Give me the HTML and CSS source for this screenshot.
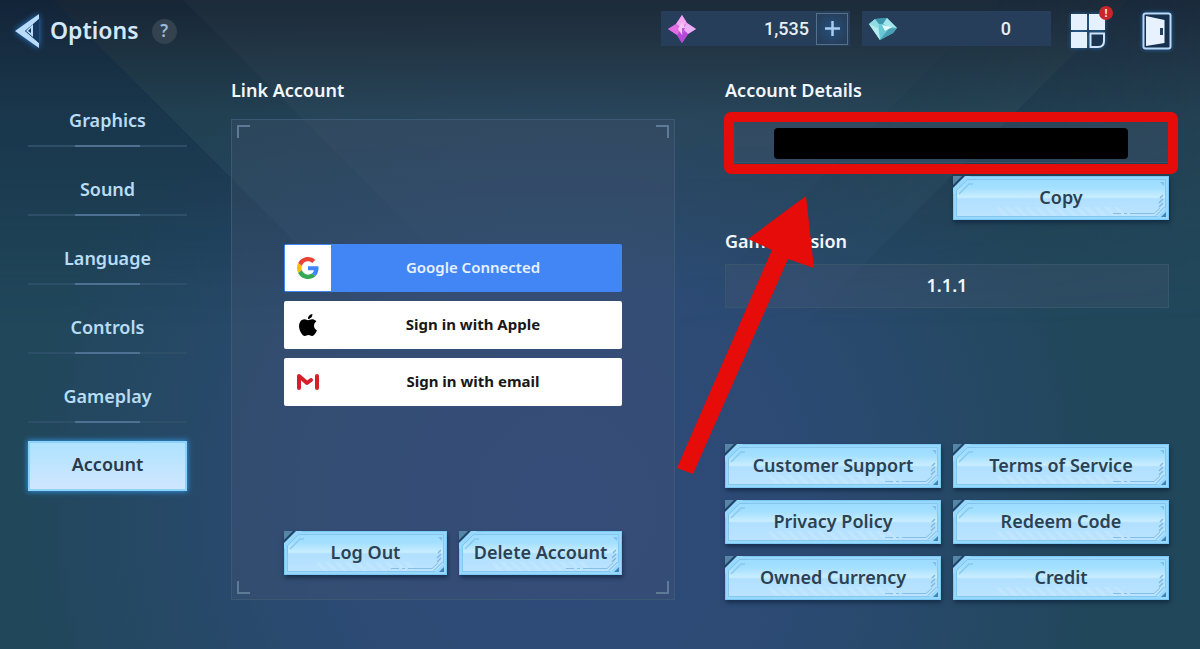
FILE: index.html
```html
<!DOCTYPE html>
<html lang="en">
<head>
    <meta charset="UTF-8">
    <meta name="viewport" content="width=device-width, initial-scale=1.0">
    <title>Options</title>
    <link rel="stylesheet" href="styles.css">
</head>
<body>
    <!-- shared corner ornaments of the plate buttons -->
    <svg class="defs" width="0" height="0" aria-hidden="true">
        <symbol id="plate-tl" viewBox="0 0 24 24">
            <path d="M0 0H18L0 18Z" fill="#98d8fc"/>
            <path d="M24 3.500H14.500L3.500 14.500V24" fill="none" stroke="#7fc3ee"/>
            <path d="M6 18L16 8H20" fill="none" stroke="#88c9f0" stroke-width="1.500"/>
            <path d="M0 0H12L0 12Z" fill="#1f4468"/>
            <path d="M0 0H9L0 9Z" fill="#5586a8"/>
        </symbol>
        <symbol id="plate-br" viewBox="0 0 60 40">
            <path d="M52 3H56V7Z" fill="#7fc1ea"/>
            <path d="M48 39L59 28V39Z" fill="#98d8fc"/>
            <path d="M48 36.500L56.500 28" stroke="#70b4df" fill="none"/>
            <path d="M53 38H58V33Z" fill="#3f83b8"/>
            <path d="M5 34.500H13M16 34.500H19M22 34.500H46L52 29" stroke="#86bfe3" fill="none"/>
            <path d="M51 28L55 24M51 24L55 20M52 19L55 16" stroke="#80b9de" stroke-width="1.500" fill="none"/>
        </symbol>
    </svg>

    <header class="topbar">
        <button class="icon-btn back" aria-label="Back">
            <svg width="26" height="36" viewBox="0 0 26 36">
                <path d="M25 1V6L11 18L25 30V35L1 18Z" fill="#b9dcfb"/>
                <path d="M25 6L11 18L25 30Z" fill="#17395f"/>
                <path d="M19 11V24L12 18Z" fill="#b9dcfb"/>
                <path d="M17 15V20L14 18Z" fill="#17395f"/>
            </svg>
        </button>
        <h1>Options</h1>
        <button class="help" aria-label="Help">?</button>

        <div class="wallet">
            <div class="currency">
                <svg width="30" height="30" viewBox="0 0 30 30">
                    <path d="M15 1L20 9L29 15L21 20L15 29L10 21L1 15L9 10Z" fill="#c455e0"/>
                    <path d="M15 1L20 9L15 14L9 10Z" fill="#f3a6f2"/>
                    <path d="M29 15L21 20L16 15L20 9Z" fill="#e9b0f5"/>
                    <path d="M15 29L10 21L15 15L21 20Z" fill="#b848dc"/>
                    <path d="M1 15L9 10L14 15L10 21Z" fill="#e26ee4"/>
                    <path d="M15 8L18 14L15 21L11 15Z" fill="#f9c4f4"/>
                    <path d="M15 14L18 14L15 21Z" fill="#c44fd8"/>
                </svg>
                <span class="amount">1,535</span>
                <button class="plus" aria-label="Add">
                    <svg width="17" height="17" viewBox="0 0 17 17">
                        <path d="M8.500 1V16M1 8.500H16" stroke="#a9cdf0" stroke-width="2.500"/>
                    </svg>
                </button>
            </div>
            <div class="currency">
                <svg width="30" height="30" viewBox="0 0 30 30">
                    <path d="M1 10L7 5L19 4L29 14L25 19L12 26Z" fill="#5bb9c9"/>
                    <path d="M1 10L7 5L11 10L12 26Z" fill="#8fdce4"/>
                    <path d="M7 5L19 4L15 10L11 10Z" fill="#3e98ad"/>
                    <path d="M19 4L29 14L21 13L15 10Z" fill="#a5e6ec"/>
                    <path d="M11 10L15 10L21 13L12 26Z" fill="#6ac8d6"/>
                    <path d="M14 11L24 13L17 17Z" fill="#e3fbfc"/>
                    <path d="M1 10L10 14L12 26Z" fill="#b6edf0"/>
                    <path d="M21 15L29 14L25 19L12 26Z" fill="#4a9fb4"/>
                </svg>
                <span class="amount amount-end">0</span>
            </div>
        </div>

        <button class="icon-btn menu" aria-label="Menu">
            <svg width="36" height="36" viewBox="0 0 36 36">
                <path d="M1 1H17V17H1ZM19 1H35V17H19ZM1 19H17V35H1Z" fill="#e6f1ff"/>
                <path d="M20.500 20.500H34V28Q34 34 28 34H20.500Z" fill="#1b3550" stroke="#cfe4fb" stroke-width="2"/>
            </svg>
            <span class="badge">!</span>
        </button>
        <button class="icon-btn exit" aria-label="Exit">
            <svg width="30" height="38" viewBox="0 0 30 38">
                <rect x="1.500" y="1.500" width="27" height="35" rx="2" fill="#16304d" stroke="#b8d8f8" stroke-width="2"/>
                <path d="M4 4L22.500 8V31L4 34Z" fill="#e8f2ff"/>
                <rect x="18" y="16" width="3" height="7" fill="#23405f"/>
            </svg>
        </button>
    </header>

    <main>
        <nav>
            <a href="#graphics">Graphics</a>
            <a href="#sound">Sound</a>
            <a href="#language">Language</a>
            <a href="#controls">Controls</a>
            <a href="#gameplay">Gameplay</a>
            <a href="#account" class="active" aria-current="page">Account</a>
        </nav>

        <section class="link-account">
            <h2>Link Account</h2>
            <div class="panel">
                <i class="corner tl"></i>
                <i class="corner tr"></i>
                <i class="corner bl"></i>
                <i class="corner br"></i>
                <div class="signins">
                    <button class="signin google">
                        <span class="logo">
                            <svg width="22" height="22" viewBox="0 0 48 48">
                                <path fill="#EA4335" d="M24 9.500c3.540 0 6.710 1.220 9.210 3.600l6.850-6.850C35.900 2.380 30.470 0 24 0 14.620 0 6.510 5.380 2.560 13.220l7.980 6.190C12.430 13.720 17.740 9.500 24 9.500z"/>
                                <path fill="#4285F4" d="M46.980 24.550c0-1.570-.15-3.090-.38-4.550H24v9.020h12.940c-.58 2.960-2.260 5.480-4.780 7.180l7.730 6c4.510-4.180 7.090-10.360 7.090-17.650z"/>
                                <path fill="#FBBC05" d="M10.530 28.590c-.48-1.450-.76-2.990-.76-4.590s.27-3.140.76-4.590l-7.980-6.190C.92 16.460 0 20.120 0 24c0 3.880.92 7.540 2.560 10.780l7.970-6.190z"/>
                                <path fill="#34A853" d="M24 48c6.480 0 11.930-2.130 15.890-5.810l-7.730-6c-2.150 1.450-4.920 2.300-8.160 2.300-6.260 0-11.570-4.220-13.470-9.910l-7.980 6.190C6.510 42.620 14.620 48 24 48z"/>
                            </svg>
                        </span>
                        <span class="label">Google Connected</span>
                    </button>
                    <button class="signin">
                        <span class="logo">
                            <svg width="22" height="22" viewBox="0 0 24 24">
                                <path d="M12.152 6.896c-.948 0-2.415-1.078-3.960-1.040-2.040.027-3.910 1.183-4.961 3.014-2.117 3.675-.546 9.103 1.519 12.090 1.013 1.454 2.208 3.090 3.792 3.039 1.520-.065 2.090-.987 3.935-.987 1.831 0 2.350.987 3.960.948 1.637-.026 2.676-1.480 3.676-2.948 1.156-1.688 1.636-3.325 1.662-3.415-.039-.013-3.182-1.221-3.220-4.857-.026-3.040 2.480-4.494 2.597-4.559-1.429-2.090-3.623-2.324-4.390-2.376-2-.156-3.675 1.090-4.610 1.090zM15.530 3.830c.843-1.012 1.400-2.427 1.245-3.830-1.207.052-2.662.805-3.532 1.818-.780.896-1.454 2.338-1.273 3.714 1.338.104 2.715-.688 3.559-1.701"/>
                            </svg>
                        </span>
                        <span class="label">Sign in with Apple</span>
                    </button>
                    <button class="signin">
                        <span class="logo">
                            <svg width="22" height="18" viewBox="0 0 22 18">
                                <path d="M2 15V3L10 10L14 7" fill="none" stroke="#d5202c" stroke-width="4" stroke-linejoin="round" stroke-linecap="round"/>
                                <path d="M20 3V15" fill="none" stroke="#d5202c" stroke-width="4" stroke-linecap="round"/>
                            </svg>
                        </span>
                        <span class="label">Sign in with email</span>
                    </button>
                </div>
                <div class="pair">
                    <button class="plate">Log Out<svg class="tl"><use href="#plate-tl"/></svg><svg class="br"><use href="#plate-br"/></svg></button>
                    <button class="plate">Delete Account<svg class="tl"><use href="#plate-tl"/></svg><svg class="br"><use href="#plate-br"/></svg></button>
                </div>
            </div>
        </section>

        <section class="details">
            <h2>Account Details</h2>
            <div class="field account-id">
                <span class="redacted"></span>
                <span class="highlight"></span>
            </div>
            <div class="pair copy-row">
                <button class="plate">Copy<svg class="tl"><use href="#plate-tl"/></svg><svg class="br"><use href="#plate-br"/></svg></button>
            </div>
            <h2 class="version-title">Game Version</h2>
            <div class="field">1.1.1</div>
            <div class="pair actions">
                <button class="plate">Customer Support<svg class="tl"><use href="#plate-tl"/></svg><svg class="br"><use href="#plate-br"/></svg></button>
                <button class="plate">Terms of Service<svg class="tl"><use href="#plate-tl"/></svg><svg class="br"><use href="#plate-br"/></svg></button>
                <button class="plate">Privacy Policy<svg class="tl"><use href="#plate-tl"/></svg><svg class="br"><use href="#plate-br"/></svg></button>
                <button class="plate">Redeem Code<svg class="tl"><use href="#plate-tl"/></svg><svg class="br"><use href="#plate-br"/></svg></button>
                <button class="plate">Owned Currency<svg class="tl"><use href="#plate-tl"/></svg><svg class="br"><use href="#plate-br"/></svg></button>
                <button class="plate">Credit<svg class="tl"><use href="#plate-tl"/></svg><svg class="br"><use href="#plate-br"/></svg></button>
            </div>
            <svg class="arrow" width="140" height="280" viewBox="0 0 140 280" aria-hidden="true">
                <path d="M130 0L138 72L112 63L17 278L1 272L96 54L72 43Z" fill="#e60c0a"/>
            </svg>
        </section>
    </main>
</body>
</html>
```

FILE: styles.css
```css
* {
    box-sizing: border-box;
}
body {
    margin: 0;
    min-height: 100vh;
    display: flex;
    flex-direction: column;
    position: relative;
    isolation: isolate;
    font-family: "Noto Sans", sans-serif;
    font-weight: 600;
    color: #f1f7fd;
    background:
        linear-gradient(180deg, #172535 0%, rgba(29, 48, 63, 0.9) 8%, rgba(32, 58, 72, 0.5) 18%, transparent 45%),
        radial-gradient(ellipse 45% 85% at 47% 78%, #2f4a7a 0%, rgba(46, 75, 120, 0.85) 45%, transparent 100%),
        #21475b;
}
/* light beams, fading out towards the middle of the screen */
body::before {
    content: "";
    position: absolute;
    inset: 0;
    z-index: -1;
    background:
        linear-gradient(45deg, rgba(10, 35, 65, 0.3) 38%, transparent 38%, transparent 45%, rgba(255, 255, 255, 0.025) 45%),
        linear-gradient(135deg, transparent 54%, rgba(10, 40, 60, 0.12) 54%, transparent 61%, rgba(10, 35, 60, 0.25) 61%, transparent 85%);
    mask-image: linear-gradient(180deg, #000 20%, transparent 50%);
}
button {
    font: inherit;
    border: none;
    padding: 0;
    cursor: pointer;
}
svg {
    display: block;
}
.defs {
    position: absolute;
}

/* top bar */
.topbar {
    display: flex;
    align-items: center;
    height: 62px;
    margin-bottom: 16px;
    padding: 0 28px 0 14px;
}
.icon-btn {
    background: none;
    position: relative;
}
.back svg {
    filter: drop-shadow(0 0 3px #2b7fd8);
}
h1 {
    margin: 0 13px 0 10px;
    font-size: 23px;
    line-height: 32px;
    padding-bottom: 2px;
    font-weight: 600;
    color: #d3e8fb;
}
.help {
    width: 25px;
    height: 25px;
    border-radius: 50%;
    background: #34424f;
    color: #9dbbd6;
    font-size: 17px;
    line-height: 24px;
}
.wallet {
    display: flex;
    gap: 12px;
    align-self: flex-start;
    margin: 11px 19px 0 auto;
}
.currency {
    display: flex;
    align-items: center;
    width: 189px;
    height: 35px;
    padding: 0 2px 0 6px;
    background: #263e59;
}
.amount {
    margin-left: auto;
    margin-right: 7px;
    font-family: "Liberation Sans Narrow", "Roboto", sans-serif;
    font-size: 18px;
    font-weight: 500;
    color: #e8eef2;
}
.amount-end {
    margin-right: 38px;
}
.plus {
    display: grid;
    place-items: center;
    width: 32px;
    height: 32px;
    border: 1px solid #56708c;
    background: radial-gradient(#25507f, #263e59 80%);
}
.menu {
    margin-right: 36px;
}
.menu svg,
.exit svg {
    filter: drop-shadow(0 0 2px #2767a6);
}
.badge {
    position: absolute;
    top: -7px;
    right: -7px;
    width: 14px;
    height: 14px;
    border-radius: 50%;
    background: #c9252b;
    color: #fff;
    font-size: 11px;
    line-height: 14px;
}

/* columns */
main {
    flex: 1;
    display: flex;
    padding: 0 31px 49px 28px;
}
nav {
    width: 159px;
    margin-right: 44px;
}
nav a {
    display: block;
    padding: 30px 0 13px;
    border-bottom: 2px solid;
    border-image: linear-gradient(90deg, #2d5068 30%, #4d7093 30%, #4d7093 70%, #2d5068 70%) 1;
    font-size: 18px;
    line-height: 24px;
    text-align: center;
    text-decoration: none;
    color: #b9dcf5;
}
nav .active {
    margin-top: 18px;
    padding: 9px 0 13px;
    border: 2px solid #8cd3fc;
    border-image: none;
    background: linear-gradient(180deg, #aee3ff, #d0e6ff);
    box-shadow: 0 0 5px 1px #2f8bd0;
    color: #27394a;
}
h2 {
    margin: 0 0 17px;
    font-size: 18px;
    line-height: 24px;
    font-weight: 600;
}
.link-account,
.details {
    flex: 1;
    display: flex;
    flex-direction: column;
}
.panel {
    position: relative;
    flex: 1;
    display: flex;
    flex-direction: column;
    padding: 0 52px 24px;
    border: 1px solid #3b5874;
    background: rgba(80, 90, 120, 0.22);
}
.corner {
    position: absolute;
    width: 13px;
    height: 13px;
    border: 0 solid #5d7b97;
}
.corner.tl {
    top: 5px;
    left: 5px;
    border-width: 2px 0 0 2px;
}
.corner.tr {
    top: 5px;
    right: 5px;
    border-width: 2px 2px 0 0;
}
.corner.bl {
    bottom: 5px;
    left: 5px;
    border-width: 0 0 2px 2px;
}
.corner.br {
    bottom: 5px;
    right: 5px;
    border-width: 0 2px 2px 0;
}

/* sign-in buttons */
.signins {
    display: grid;
    gap: 9px;
    margin: auto 0;
    padding-bottom: 2px;
}
.signin {
    display: flex;
    height: 48px;
    padding: 1px;
    border-radius: 2px;
    background: #fff;
    color: #181818;
    font-size: 15px;
    font-weight: 700;
}
.signin .logo {
    display: grid;
    place-items: center;
    width: 46px;
    height: 46px;
    background: #fff;
}
.signin .label {
    flex: 1;
    padding-right: 6px;
    line-height: 44px;
}
.signin.google {
    background: #4285f4;
    color: #e8f1ff;
    font-weight: 600;
}

/* plate buttons */
.pair {
    display: grid;
    grid-template-columns: 1fr 1fr;
    gap: 12px;
}
.plate {
    position: relative;
    isolation: isolate;
    height: 44px;
    padding-bottom: 2px;
    border: 1px solid #7cc8f5;
    background:
        repeating-linear-gradient(45deg, rgba(255, 255, 255, 0.12) 0 3px, transparent 3px 7px) 50% 100% / 60% 12px no-repeat,
        linear-gradient(180deg, #9bdcff 0%, #a3dfff 25%, #c9edff 48%, #b0e0ff 52%, #bde4ff 100%);
    box-shadow: 1px 3px 4px rgba(10, 30, 55, 0.6);
    color: #2b4154;
    font-size: 18px;
    line-height: 24px;
}
.plate::before {
    content: "";
    position: absolute;
    inset: 0;
    z-index: -1;
    border: 2px solid #98d8fc;
    outline: 1px solid #84c8f0;
    outline-offset: -3px;
}
.plate svg {
    position: absolute;
    z-index: -1;
}
.plate .tl {
    top: -1px;
    left: -1px;
    width: 24px;
    height: 24px;
}
.plate .br {
    right: 0;
    bottom: 0;
    width: 60px;
    height: 40px;
}

/* account details */
.details {
    position: relative;
    margin-left: 50px;
}
.field {
    position: relative;
    height: 44px;
    border: 1px solid #38566b;
    background: rgba(80, 90, 120, 0.25);
    font-size: 18px;
    line-height: 40px;
    text-align: center;
}
.account-id {
    margin-bottom: 13px;
    padding: 8px 40px 4px 48px;
}
.redacted {
    display: block;
    height: 31px;
    border-radius: 4px;
    background: #000;
}
.highlight {
    position: absolute;
    inset: -8px -10px -12px -2px;
    border: 10px solid #e60c0a;
    border-radius: 7px;
}
.copy-row .plate {
    grid-column: 2;
}
.version-title {
    margin: 9px 0 11px;
}
.actions {
    margin-top: auto;
}
.arrow {
    position: absolute;
    top: 118px;
    left: -49px;
}
```
